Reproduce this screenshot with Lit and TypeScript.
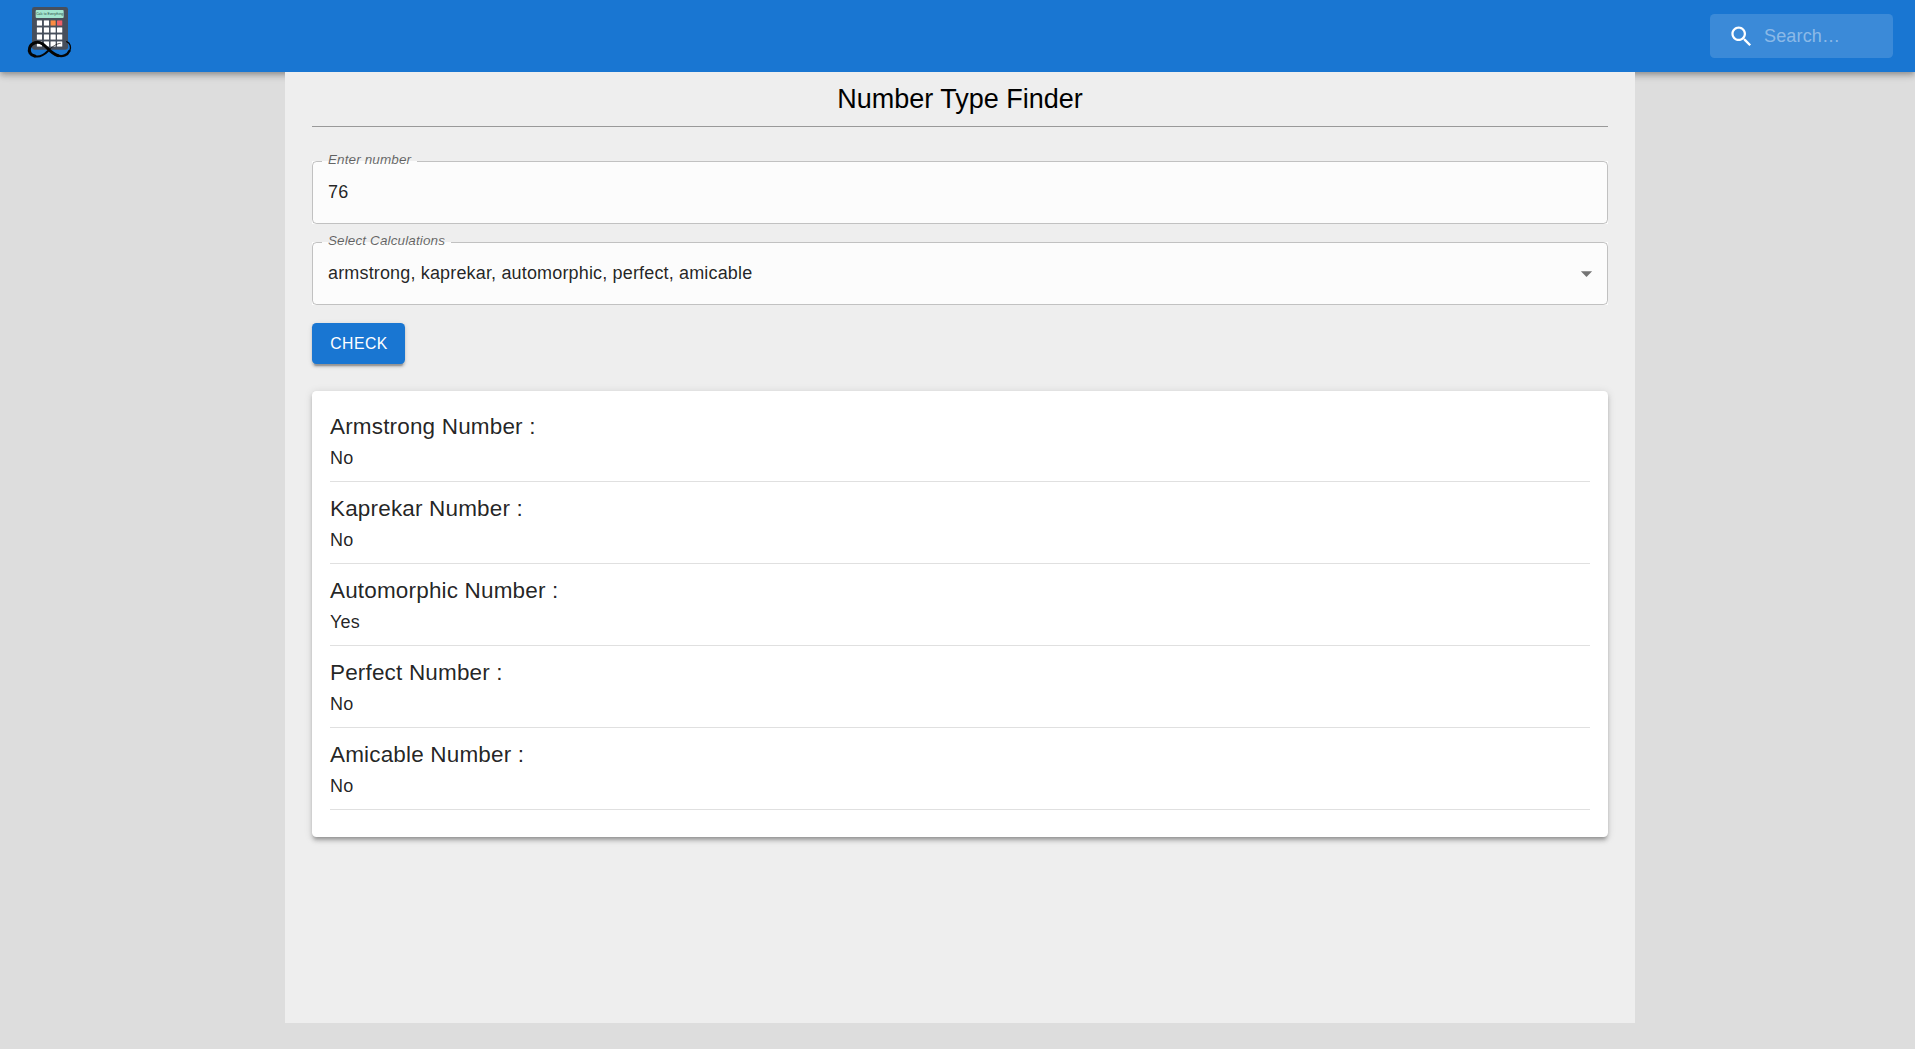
import { LitElement, html, css } from "lit";
import { customElement, state } from "lit/decorators.js";

interface Result {
  name: string;
  value: string;
}

@customElement("app-root")
export class AppRoot extends LitElement {
  @state() private results: Result[] = [
    { name: "Armstrong", value: "No" },
    { name: "Kaprekar", value: "No" },
    { name: "Automorphic", value: "Yes" },
    { name: "Perfect", value: "No" },
    { name: "Amicable", value: "No" },
  ];

  static styles = css`
    :host {
      display: block;
      min-height: 1049px;
      background: #ddd;
      color: rgba(0, 0, 0, 0.87);
      font-family: "Liberation Sans", Arial, sans-serif;
      font-size: 18px;
      letter-spacing: 0.16px;
    }
    *, *::before { box-sizing: border-box; }
    .bar {
      display: flex;
      align-items: center;
      justify-content: space-between;
      height: 72px;
      padding: 0 22px 0 27px;
      background: #1976d2;
      box-shadow: 0 2.25px 4.5px -1.1px rgba(0, 0, 0, 0.2),
        0 4.5px 5.6px 0 rgba(0, 0, 0, 0.14),
        0 1.1px 11.25px 0 rgba(0, 0, 0, 0.12);
    }
    .logo { display: block; width: 46px; height: 62px; }
    .screen-text { font-size: 9px; letter-spacing: 0; }
    .search {
      display: flex;
      align-items: center;
      width: 183px;
      height: 44px;
      padding-left: 18px;
      gap: 9px;
      border-radius: 4.5px;
      background: rgba(255, 255, 255, 0.15);
      color: rgba(255, 255, 255, 0.42);
      line-height: 20px;
    }
    .search svg { width: 27px; height: 27px; fill: #fff; }
    .panel {
      position: relative;
      width: 1350px;
      height: 951px;
      margin: 0 auto 0 285px;
      padding: 9px 27px 0;
      background: #eee;
    }
    h1 {
      margin: 0;
      padding-bottom: 9px;
      border-bottom: 1px solid #999;
      font-size: 27px;
      line-height: 36px;
      height: 46px;
      font-weight: 400;
      letter-spacing: 0;
      text-align: center;
      color: #000;
    }
    .field {
      position: relative;
      height: 63px;
      margin-bottom: 18px;
      background: #fcfcfc;
    }
    .first { margin-top: 34px; }
    .outline {
      display: flex;
      align-items: center;
      justify-content: space-between;
      height: 63px;
      padding: 0 7px 0 15px;
      border: 1px solid rgba(0, 0, 0, 0.23);
      border-radius: 4.5px;
    }
    .outline svg { width: 27px; height: 27px; fill: rgba(0, 0, 0, 0.54); }
    .label {
      position: absolute;
      left: 10px;
      top: -9px;
      height: 16px;
      padding: 0 6px;
      font-size: 13.5px;
      line-height: 16px;
      letter-spacing: 0.12px;
      font-style: italic;
      color: rgba(0, 0, 0, 0.6);
      background: linear-gradient(#fcfcfc, #fcfcfc) 0 9px / 100% 1px no-repeat;
      white-space: nowrap;
    }
    button {
      display: block;
      width: 93px;
      height: 41px;
      padding: 0 0 0 1px;
      border: 0;
      border-radius: 4.5px;
      background: #1976d2;
      color: #fff;
      font: 500 15.75px "Liberation Sans", Arial, sans-serif;
      letter-spacing: 0.45px;
      box-shadow: 0 3.4px 1.1px -2.25px rgba(0, 0, 0, 0.2),
        0 2.25px 2.25px 0 rgba(0, 0, 0, 0.14),
        0 1.1px 5.6px 0 rgba(0, 0, 0, 0.12);
    }
    .card {
      height: 446px;
      margin-top: 27px;
      padding: 18px;
      border-radius: 4.5px;
      background: #fff;
      box-shadow: 0 3.4px 3.4px -2.25px rgba(0, 0, 0, 0.2),
        0 3.4px 4.5px 0 rgba(0, 0, 0, 0.14),
        0 1.1px 9px 0 rgba(0, 0, 0, 0.12);
    }
    .row {
      height: 73px;
      margin-bottom: 9px;
      border-bottom: 1px solid rgba(0, 0, 0, 0.12);
    }
    h2 {
      margin: 0;
      font-size: 22.5px;
      line-height: 36px;
      font-weight: 400;
      letter-spacing: 0.169px;
    }
    .value { line-height: 27px; }
  `;

  private logo() {
    const xs = [110, 131, 151, 171];
    const ys = [61, 82, 103, 124];
    const fill = (r: number, c: number) =>
      r === 0 && c === 2 ? "#fb8c42" : r === 0 && c === 3 ? "#ee5f68" : "#fff";
    return html`<svg class="logo" viewBox="81 15 138 186">
      <rect x="96" y="21" width="108" height="128" rx="7" fill="#474f5c"></rect>
      <rect x="107" y="30" width="84" height="24" rx="3" fill="#a3e5cf"></rect>
      <text class="screen-text" x="108.5" y="45" textLength="81" lengthAdjust="spacingAndGlyphs" fill="#24423c">Calc to Everything</text>
      ${ys.map((y, r) =>
        xs.map(
          (x, c) => html`<svg x=${x} y=${y} width="16.5" height="16.5" viewBox="0 0 16 16">
            <rect width="16" height="16" rx="1.5" fill=${fill(r, c)}></rect>
          </svg>`,
        ),
      )}
      <g fill="none" stroke="#050505" stroke-linecap="round">
        <path stroke-width="9" d="M104 168C91 165 85 155 89 143C94 128 112 122 128 132C144 143 151 160 174 167"></path>
        <path stroke-width="6" d="M102 168C117 173 132 165 144 153"></path>
        <path stroke-width="2" d="M144 153C156 139 172 130 181 130"></path>
        <path stroke-width="7" d="M172 166C188 172 203 165 208 153"></path>
        <path stroke-width="4" d="M209 154C215 141 210 129 200 125"></path>
      </g>
    </svg>`;
  }

  render() {
    return html`
      <header class="bar">
        ${this.logo()}
        <div class="search">
          <svg viewBox="0 0 24 24"><path d="M15.5 14h-.79l-.28-.27C15.41 12.59 16 11.11 16 9.5 16 5.91 13.09 3 9.5 3S3 5.91 3 9.5 5.91 16 9.5 16c1.61 0 3.09-.59 4.23-1.57l.27.28v.79l5 4.99L20.49 19l-4.99-5zm-6 0C7.01 14 5 11.99 5 9.5S7.01 5 9.5 5 14 7.01 14 9.5 11.99 14 9.5 14z"></path></svg>
          <span>Search…</span>
        </div>
      </header>
      <main class="panel">
        <h1>Number Type Finder</h1>
        <div class="field first">
          <div class="outline"><span>76</span></div>
          <span class="label">Enter number</span>
        </div>
        <div class="field">
          <div class="outline">
            <span>armstrong, kaprekar, automorphic, perfect, amicable</span>
            <svg viewBox="0 0 24 24"><path d="M7 10l5 5 5-5z"></path></svg>
          </div>
          <span class="label">Select Calculations</span>
        </div>
        <button>CHECK</button>
        <section class="card">
          ${this.results.map(
            (r) => html`<div class="row">
              <h2>${r.name} Number :</h2>
              <div class="value">${r.value}</div>
            </div>`,
          )}
        </section>
      </main>
    `;
  }
}
